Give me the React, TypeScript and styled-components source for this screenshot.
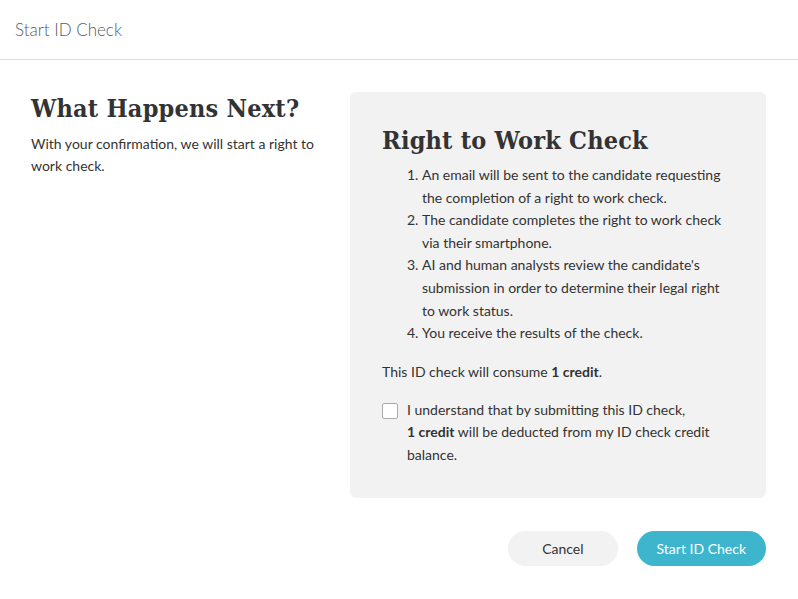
import styled, { createGlobalStyle } from 'styled-components';

const GlobalStyle = createGlobalStyle`
  html, body {
    margin: 0;
    padding: 0;
    background: #ffffff;
  }
  body {
    font-family: Lato, "Open Sans", "Liberation Sans", sans-serif;
    color: #333;
  }
`

const Modal = styled.div`
  width: 798px;
  height: 599px;
  box-sizing: border-box;
  display: flex;
  flex-direction: column;
  background: #fff;
  border-radius: 6px;
  overflow: hidden;
`

const ModalHeader = styled.div`
  height: 59px;
  display: flex;
  align-items: center;
  padding: 0 15px;
  border-bottom: 1px solid #dcdcdc;
  font-size: 17px;
  font-weight: 300;
  color: #5a5a5a;
`

const ModalBody = styled.div`
  display: flex;
  gap: 34px;
  padding: 32px 32px 0 31px;
`

const Intro = styled.div`
  width: 285px;
  padding-top: 1px;
`

const Heading = styled.h2`
  margin: 0;
  font-family: "DejaVu Serif Condensed", "DejaVu Serif", "Liberation Serif", serif;
  font-stretch: condensed;
  font-size: 25px;
  line-height: 32px;
  font-weight: bold;
  letter-spacing: 0.2px;
  color: #333;
`

const IntroText = styled.p`
  margin: 8px 0 0;
  font-size: 14px;
  line-height: 22px;
  color: #333;
`

const Panel = styled.div`
  flex: 1;
  height: 406px;
  box-sizing: border-box;
  background: #f2f2f2;
  border-radius: 6px;
  padding: 33px 32px 0 32px;
`

const Steps = styled.ol`
  margin: 7px 0 0;
  padding-left: 40px;
  font-size: 14px;
  line-height: 22.6px;
  color: #333;
`

const Consume = styled.p`
  margin: 16px 0 0;
  font-size: 14px;
  line-height: 22px;
`

const Agreement = styled.label`
  display: flex;
  gap: 9px;
  margin-top: 16px;
  font-size: 14px;
  line-height: 22.5px;
`

const Box = styled.span`
  flex: none;
  width: 14px;
  height: 14px;
  margin-top: 4px;
  border: 1px solid #aaa;
  border-radius: 2px;
  background: #fff;
`

const AgreementText = styled.div`
  flex: 1;

  & > p {
    margin: 0;
  }
`

const Footer = styled.div`
  display: flex;
  justify-content: flex-end;
  gap: 19px;
  padding: 33px 32px 0 0;
`

const Button = styled.button<{ $primary?: boolean }>`
  height: 35px;
  padding: 0 ${p => (p.$primary ? '20px' : '34px')};
  border: none;
  border-radius: 18px;
  font-family: inherit;
  font-size: 14px;
  color: ${p => (p.$primary ? '#fff' : '#333')};
  background: ${p => (p.$primary ? '#3db6cd' : '#f2f2f2')};
  cursor: pointer;
`

export default function App() {
  return (
    <Modal>
      <GlobalStyle />
      <ModalHeader>Start ID Check</ModalHeader>
      <ModalBody>
        <Intro>
          <Heading>What Happens Next?</Heading>
          <IntroText>With your confirmation, we will start a right to work check.</IntroText>
        </Intro>
        <Panel>
          <Heading>Right to Work Check</Heading>
          <Steps>
            <li>An email will be sent to the candidate requesting the completion of a right to work check.</li>
            <li>The candidate completes the right to work check via their smartphone.</li>
            <li>AI and human analysts review the candidate's submission in order to determine their legal right to work status.</li>
            <li>You receive the results of the check.</li>
          </Steps>
          <Consume>This ID check will consume <b>1 credit</b>.</Consume>
          <Agreement>
            <Box />
            <AgreementText>
              <p>I understand that by submitting this ID check,</p>
              <p><b>1 credit</b> will be deducted from my ID check credit balance.</p>
            </AgreementText>
          </Agreement>
        </Panel>
      </ModalBody>
      <Footer>
        <Button>Cancel</Button>
        <Button $primary>Start ID Check</Button>
      </Footer>
    </Modal>
  )
}
